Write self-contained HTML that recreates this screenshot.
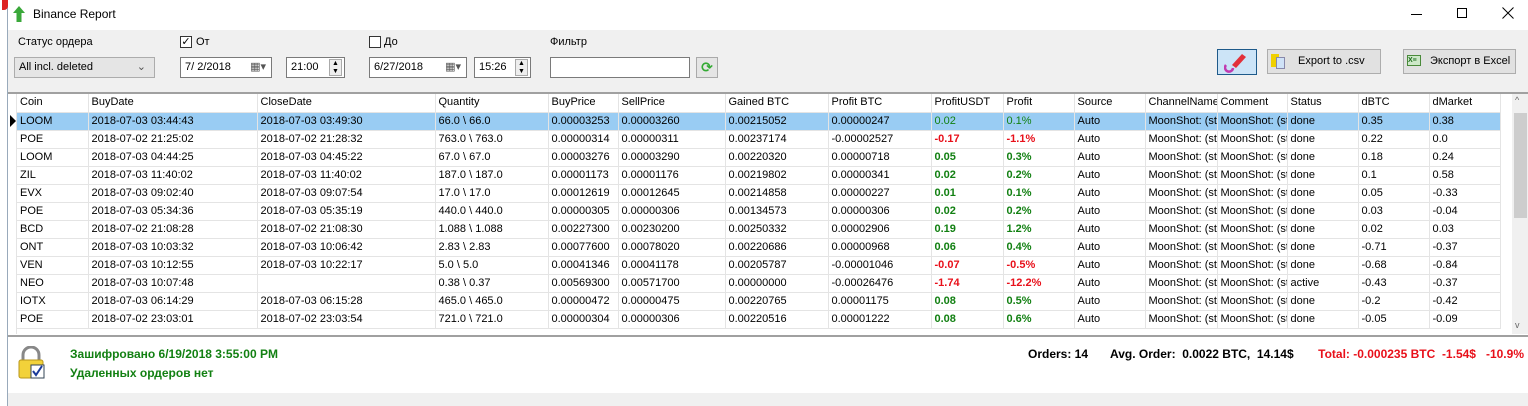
<!DOCTYPE html>
<html><head><meta charset="utf-8"><style>
*{margin:0;padding:0;box-sizing:border-box}
body{width:1528px;height:406px;overflow:hidden;background:#fff;font-family:"Liberation Sans","DejaVu Sans",sans-serif;font-size:11px;color:#000;position:relative}
.a{position:absolute}
.strip{left:0;top:0;width:8px;height:406px;background:#fff;border-right:1px solid #9ab;}
.tb{left:8px;top:30px;width:1520px;height:62px;background:#f0f0f0}
.inp{background:#fff;border:1px solid #7a7a7a;height:21px;line-height:19px;padding-left:4px;font-size:11px}
.btn{background:#e1e1e1;border:1px solid #adadad;height:25px;line-height:23px;font-size:11px}
table{border-collapse:collapse;table-layout:fixed}
td{height:18px;border-right:1px solid #e4e4e4;border-bottom:1px solid #e4e4e4;padding-left:3px;white-space:nowrap;overflow:hidden;font-size:11px;line-height:17px}
tr.h td{background:#fff;}
tr.s td{background:#99ccf3}
.g{color:#128012;font-weight:bold}.r{color:#e8101a;font-weight:bold}
tr.s .g{font-weight:normal}
.ft{font-size:12px;font-weight:bold;white-space:nowrap}
</style></head><body>
<div class="a strip"></div>
<div class="a" style="left:2px;top:0;width:6px;height:10px;background:#d22;border-radius:0 0 4px 0"></div>
<svg class="a" style="left:13px;top:6px" width="12" height="16"><path d="M6 0L12 7H8.5V16H3.5V7H0Z" fill="#3aa83a"/></svg>
<div class="a" style="left:33px;top:7px;font-size:12px">Binance Report</div>
<div class="a" style="left:1411px;top:14px;width:11px;height:1px;background:#000"></div>
<div class="a" style="left:1457px;top:8px;width:10px;height:10px;border:1px solid #000"></div>
<svg class="a" style="left:1502px;top:7px" width="12" height="12"><path d="M0.5 0.5L11.5 11.5M11.5 0.5L0.5 11.5" stroke="#000"/></svg>
<div class="a tb"></div>
<div class="a" style="left:18px;top:36px">Статус ордера</div>
<div class="a" style="left:14px;top:57px;width:141px;height:21px;background:#e5e5e5;border:1px solid #acacac;line-height:19px;padding-left:4px">All incl. deleted<span style="position:absolute;right:8px;top:0;color:#555">⌄</span></div>
<div class="a" style="left:180px;top:36px;width:12px;height:12px;border:1px solid #333;background:#fff;font-size:11px;line-height:10px;text-align:center">✓</div>
<div class="a" style="left:196px;top:36px">От</div>
<div class="a inp" style="left:180px;top:57px;width:92px">7/ 2/2018<span style="position:absolute;right:5px;color:#555">▦▾</span></div>
<div class="a inp" style="left:286px;top:57px;width:59px">21:00<span style="position:absolute;right:2px;top:1px;width:13px;height:17px;border:1px solid #aaa;font-size:7px;line-height:8px;text-align:center;background:#eee">▲<br>▼</span></div>
<div class="a" style="left:369px;top:36px;width:12px;height:12px;border:1px solid #333;background:#fff"></div>
<div class="a" style="left:384px;top:36px">До</div>
<div class="a inp" style="left:369px;top:57px;width:98px">6/27/2018<span style="position:absolute;right:5px;color:#555">▦▾</span></div>
<div class="a inp" style="left:474px;top:57px;width:57px">15:26<span style="position:absolute;right:2px;top:1px;width:13px;height:17px;border:1px solid #aaa;font-size:7px;line-height:8px;text-align:center;background:#eee">▲<br>▼</span></div>
<div class="a" style="left:550px;top:36px">Фильтр</div>
<div class="a inp" style="left:550px;top:57px;width:140px"></div>
<div class="a" style="left:696px;top:57px;width:22px;height:21px;border:1px solid #aaa;background:#e5e5e5;color:#3a3;text-align:center;font-weight:bold;font-size:14px;line-height:19px">⟳</div>
<div class="a" style="left:1217px;top:49px;width:40px;height:26px;background:#cce4f7;border:1px solid #1e5a8a"></div>
<svg class="a" style="left:1224px;top:51px" width="26" height="22"><path d="M8 14L18 3L22 6L12 17Z" fill="#e2303a"/><path d="M2 14a4 4 0 1 0 7 3" stroke="#c03ab0" stroke-width="2.5" fill="none"/></svg>
<div class="a btn" style="left:1267px;top:49px;width:114px;padding-left:30px">Export to .csv</div>
<div class="a" style="left:1271px;top:54px;width:8px;height:13px;background:#f0d000"></div>
<div class="a" style="left:1276px;top:57px;width:9px;height:12px;background:#cfe2f7;border:1px solid #88a"></div>
<div class="a btn" style="left:1403px;top:49px;width:113px;padding-left:26px">Экспорт в Excel</div>
<div class="a" style="left:1407px;top:55px;width:14px;height:11px;background:#cde8c8;border:1px solid #4a8a3a;font-size:7px;line-height:9px;color:#1a6a1a;font-weight:bold">X≡</div>
<div class="a" style="left:8px;top:92px;width:1520px;height:2px;background:#a0a0a0"></div>
<div class="a" style="left:8px;top:94px;width:9px;height:240px;background:#fff;border-right:1px solid #e4e4e4"></div>
<div class="a" style="left:10px;top:115px;width:0;height:0;border-left:6px solid #000;border-top:6px solid transparent;border-bottom:6px solid transparent"></div>
<table class="a" style="left:17px;top:94px;width:1483px">
<colgroup><col style="width:71px"><col style="width:169px"><col style="width:178px"><col style="width:113px"><col style="width:70px"><col style="width:107px"><col style="width:103px"><col style="width:103px"><col style="width:72px"><col style="width:71px"><col style="width:71px"><col style="width:72px"><col style="width:70px"><col style="width:71px"><col style="width:71px"><col style="width:71px"></colgroup>
<tr class="h"><td>Coin</td><td>BuyDate</td><td>CloseDate</td><td>Quantity</td><td>BuyPrice</td><td>SellPrice</td><td>Gained BTC</td><td>Profit BTC</td><td>ProfitUSDT</td><td>Profit</td><td>Source</td><td>ChannelName</td><td>Comment</td><td>Status</td><td>dBTC</td><td>dMarket</td></tr>
<tr class="s"><td>LOOM</td><td>2018-07-03 03:44:43</td><td>2018-07-03 03:49:30</td><td>66.0 \ 66.0</td><td>0.00003253</td><td>0.00003260</td><td>0.00215052</td><td>0.00000247</td><td class="g">0.02</td><td class="g">0.1%</td><td>Auto</td><td>MoonShot: (st</td><td>MoonShot: (st</td><td>done</td><td>0.35</td><td>0.38</td></tr>
<tr><td>POE</td><td>2018-07-02 21:25:02</td><td>2018-07-02 21:28:32</td><td>763.0 \ 763.0</td><td>0.00000314</td><td>0.00000311</td><td>0.00237174</td><td>-0.00002527</td><td class="r">-0.17</td><td class="r">-1.1%</td><td>Auto</td><td>MoonShot: (st</td><td>MoonShot: (st</td><td>done</td><td>0.22</td><td>0.0</td></tr>
<tr><td>LOOM</td><td>2018-07-03 04:44:25</td><td>2018-07-03 04:45:22</td><td>67.0 \ 67.0</td><td>0.00003276</td><td>0.00003290</td><td>0.00220320</td><td>0.00000718</td><td class="g">0.05</td><td class="g">0.3%</td><td>Auto</td><td>MoonShot: (st</td><td>MoonShot: (st</td><td>done</td><td>0.18</td><td>0.24</td></tr>
<tr><td>ZIL</td><td>2018-07-03 11:40:02</td><td>2018-07-03 11:40:02</td><td>187.0 \ 187.0</td><td>0.00001173</td><td>0.00001176</td><td>0.00219802</td><td>0.00000341</td><td class="g">0.02</td><td class="g">0.2%</td><td>Auto</td><td>MoonShot: (st</td><td>MoonShot: (st</td><td>done</td><td>0.1</td><td>0.58</td></tr>
<tr><td>EVX</td><td>2018-07-03 09:02:40</td><td>2018-07-03 09:07:54</td><td>17.0 \ 17.0</td><td>0.00012619</td><td>0.00012645</td><td>0.00214858</td><td>0.00000227</td><td class="g">0.01</td><td class="g">0.1%</td><td>Auto</td><td>MoonShot: (st</td><td>MoonShot: (st</td><td>done</td><td>0.05</td><td>-0.33</td></tr>
<tr><td>POE</td><td>2018-07-03 05:34:36</td><td>2018-07-03 05:35:19</td><td>440.0 \ 440.0</td><td>0.00000305</td><td>0.00000306</td><td>0.00134573</td><td>0.00000306</td><td class="g">0.02</td><td class="g">0.2%</td><td>Auto</td><td>MoonShot: (st</td><td>MoonShot: (st</td><td>done</td><td>0.03</td><td>-0.04</td></tr>
<tr><td>BCD</td><td>2018-07-02 21:08:28</td><td>2018-07-02 21:08:30</td><td>1.088 \ 1.088</td><td>0.00227300</td><td>0.00230200</td><td>0.00250332</td><td>0.00002906</td><td class="g">0.19</td><td class="g">1.2%</td><td>Auto</td><td>MoonShot: (st</td><td>MoonShot: (st</td><td>done</td><td>0.02</td><td>0.03</td></tr>
<tr><td>ONT</td><td>2018-07-03 10:03:32</td><td>2018-07-03 10:06:42</td><td>2.83 \ 2.83</td><td>0.00077600</td><td>0.00078020</td><td>0.00220686</td><td>0.00000968</td><td class="g">0.06</td><td class="g">0.4%</td><td>Auto</td><td>MoonShot: (st</td><td>MoonShot: (st</td><td>done</td><td>-0.71</td><td>-0.37</td></tr>
<tr><td>VEN</td><td>2018-07-03 10:12:55</td><td>2018-07-03 10:22:17</td><td>5.0 \ 5.0</td><td>0.00041346</td><td>0.00041178</td><td>0.00205787</td><td>-0.00001046</td><td class="r">-0.07</td><td class="r">-0.5%</td><td>Auto</td><td>MoonShot: (st</td><td>MoonShot: (st</td><td>done</td><td>-0.68</td><td>-0.84</td></tr>
<tr><td>NEO</td><td>2018-07-03 10:07:48</td><td></td><td>0.38 \ 0.37</td><td>0.00569300</td><td>0.00571700</td><td>0.00000000</td><td>-0.00026476</td><td class="r">-1.74</td><td class="r">-12.2%</td><td>Auto</td><td>MoonShot: (st</td><td>MoonShot: (st</td><td>active</td><td>-0.43</td><td>-0.37</td></tr>
<tr><td>IOTX</td><td>2018-07-03 06:14:29</td><td>2018-07-03 06:15:28</td><td>465.0 \ 465.0</td><td>0.00000472</td><td>0.00000475</td><td>0.00220765</td><td>0.00001175</td><td class="g">0.08</td><td class="g">0.5%</td><td>Auto</td><td>MoonShot: (st</td><td>MoonShot: (st</td><td>done</td><td>-0.2</td><td>-0.42</td></tr>
<tr><td>POE</td><td>2018-07-02 23:03:01</td><td>2018-07-02 23:03:54</td><td>721.0 \ 721.0</td><td>0.00000304</td><td>0.00000306</td><td>0.00220516</td><td>0.00001222</td><td class="g">0.08</td><td class="g">0.6%</td><td>Auto</td><td>MoonShot: (st</td><td>MoonShot: (st</td><td>done</td><td>-0.05</td><td>-0.09</td></tr>
</table>
<div class="a" style="left:1512px;top:94px;width:16px;height:240px;background:#f0f0f0"></div>
<div class="a" style="left:1514px;top:113px;width:13px;height:105px;background:#cdcdcd"></div>
<div class="a" style="left:1515px;top:95px;font-size:9px;color:#666">^</div>
<div class="a" style="left:1515px;top:320px;font-size:9px;color:#666">v</div>
<div class="a" style="left:8px;top:335px;width:1520px;height:2px;background:#a0a0a0"></div>
<svg class="a" style="left:16px;top:346px" width="30" height="34"><path d="M7 14V9a8 8 0 0 1 16 0v5" stroke="#888" stroke-width="3" fill="none"/><rect x="3" y="14" width="24" height="18" rx="2" fill="#f2d23a" stroke="#b8961a"/><rect x="15" y="19" width="13" height="13" fill="#fff" stroke="#345"/><path d="M17 25l3 4l6-9" stroke="#1a3a9a" stroke-width="2" fill="none"/></svg>
<div class="a g ft" style="left:70px;top:347px">Зашифровано 6/19/2018 3:55:00 PM</div>
<div class="a g ft" style="left:70px;top:366px">Удаленных ордеров нет</div>
<div class="a ft" style="left:1028px;top:347px">Orders: 14</div>
<div class="a ft" style="left:1110px;top:347px">Avg. Order:&nbsp; 0.0022 BTC,&nbsp; 14.14$</div>
<div class="a r ft" style="right:4px;top:347px">Total: -0.000235 BTC&nbsp; -1.54$&nbsp;&nbsp; -10.9%</div>
<div class="a" style="left:8px;top:393px;width:1520px;height:13px;background:#f0f0f0"></div>
</body></html>
